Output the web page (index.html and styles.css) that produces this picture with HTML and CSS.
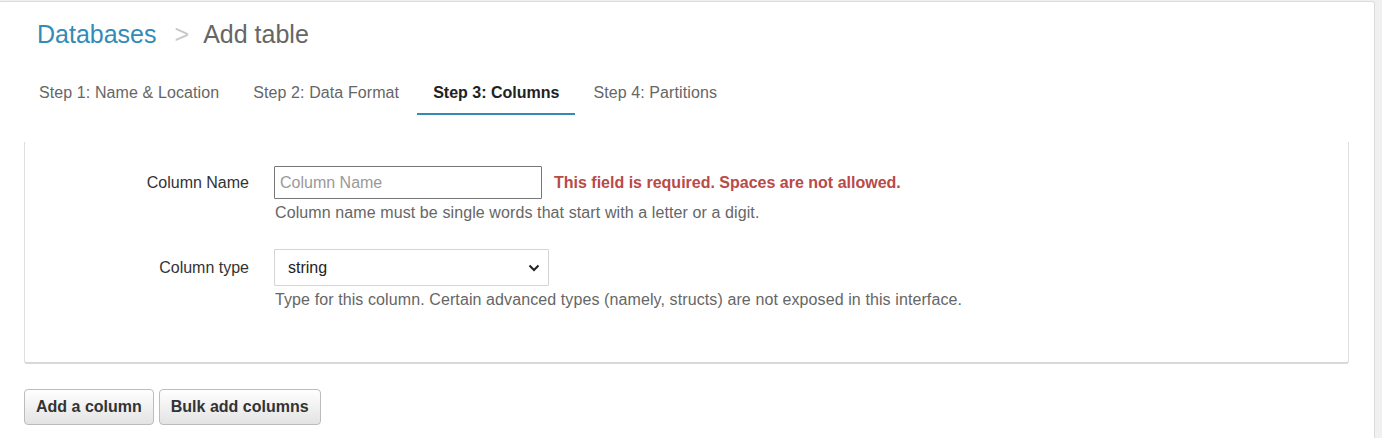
FILE: index.html
```html
<!DOCTYPE html>
<html>
<head>
<meta charset="utf-8">
<link rel="stylesheet" href="styles.css">
</head>
<body>
<div class="page">
  <h1 class="crumbs"><a class="crumb-link">Databases</a><span class="sep">&gt;</span><span class="crumb-current">Add table</span></h1>
  <ul class="tabs">
    <li class="tab">Step 1: Name &amp; Location</li>
    <li class="tab">Step 2: Data Format</li>
    <li class="tab active">Step 3: Columns</li>
    <li class="tab">Step 4: Partitions</li>
  </ul>
  <div class="card">
    <div class="row">
      <label class="label">Column Name</label>
      <div class="controls">
        <div class="control-line">
          <input class="text-input" type="text" placeholder="Column Name">
          <span class="error">This field is required. Spaces are not allowed.</span>
        </div>
        <p class="help">Column name must be single words that start with a letter or a digit.</p>
      </div>
    </div>
    <div class="row row-second">
      <label class="label label-select">Column type</label>
      <div class="controls">
        <div class="select-wrap">
          <select class="select"><option>string</option></select>
          <svg class="chevron" width="12" height="8" viewBox="0 0 12 8"><path d="M1.5 1.5 L6 6 L10.5 1.5" fill="none" stroke="#222" stroke-width="2"/></svg>
        </div>
        <p class="help">Type for this column. Certain advanced types (namely, structs) are not exposed in this interface.</p>
      </div>
    </div>
  </div>
  <div class="actions">
    <button class="btn">Add a column</button>
    <button class="btn">Bulk add columns</button>
  </div>
</div>
</body>
</html>
```
FILE: styles.css
```css
html, body {
  margin: 0;
  padding: 0;
  background: #f0f0f0;
  font-family: "Liberation Sans", Arial, sans-serif;
  color: #333;
  overflow: hidden;
}
.page {
  box-sizing: border-box;
  width: 1377px;
  height: 440px;
  margin-left: -2px;
  margin-top: 1px;
  background: #fff;
  border: 1px solid #dcdcdc;
  border-bottom: none;
  border-radius: 3px 3px 0 0;
  padding: 0 25px;
}
.crumbs {
  margin: 0;
  padding: 17px 0 0 13px;
  font-size: 25px;
  font-weight: normal;
  line-height: 30px;
  display: flex;
}
.crumb-link { color: #338bb8; }
.sep { color: #c8c8c8; margin: 0 14px 0 18px; }
.crumb-current { color: #666; }
.tabs {
  list-style: none;
  margin: 24px 0 0 -1px;
  padding: 0;
  display: flex;
  gap: 2px;
}
.tab {
  font-size: 16px;
  line-height: 20px;
  color: #666;
  padding: 10px 16px 10px;
  border-bottom: 2px solid transparent;
  letter-spacing: 0.1px;
}
.tab.active {
  color: #222;
  font-weight: bold;
  letter-spacing: 0;
  border-bottom-color: #338bb8;
}
.card {
  margin-top: 27px;
  border: 1px solid #dedede;
  border-top: none;
  border-bottom: 2px solid #d8d8d8;
  border-radius: 0 0 3px 3px;
  padding: 24px 0 52px;
}
.row {
  display: flex;
  align-items: flex-start;
  gap: 25px;
}
.row-second { margin-top: 26px; }
.label {
  width: 224px;
  text-align: right;
  font-size: 16px;
  line-height: 33px;
  color: #333;
}
.label-select { line-height: 37px; }
.controls { display: flex; flex-direction: column; }
.control-line { display: flex; align-items: center; gap: 12px; }
.text-input {
  box-sizing: border-box;
  width: 268px;
  height: 33px;
  border: 1px solid #777;
  border-radius: 1px;
  padding: 0 5px;
  font-family: inherit;
  font-size: 16px;
  color: #333;
  outline: none;
}
.text-input::placeholder { color: #999; }
.error {
  color: #b94a48;
  font-weight: bold;
  font-size: 16px;
}
.help {
  margin: 4px 0 0 1px;
  font-size: 16px;
  line-height: 20px;
  color: #666;
  letter-spacing: 0.1px;
}
.select-wrap { position: relative; width: 275px; height: 37px; }
.select {
  box-sizing: border-box;
  width: 275px;
  height: 37px;
  -webkit-appearance: none;
  appearance: none;
  background: #fff;
  border: 1px solid #d4d4d4;
  border-radius: 1px;
  padding: 0 13px;
  font-family: inherit;
  font-size: 16px;
  color: #222;
}
.chevron {
  position: absolute;
  right: 9px;
  top: 15px;
  pointer-events: none;
}
.actions {
  margin-top: 25px;
  display: flex;
  gap: 5px;
}
.btn {
  height: 36px;
  padding: 0 11px;
  font-family: inherit;
  font-size: 16px;
  font-weight: bold;
  color: #333;
  background: linear-gradient(#ffffff, #e3e3e3);
  border: 1px solid #bcbcbc;
  border-radius: 4px;
}
```
